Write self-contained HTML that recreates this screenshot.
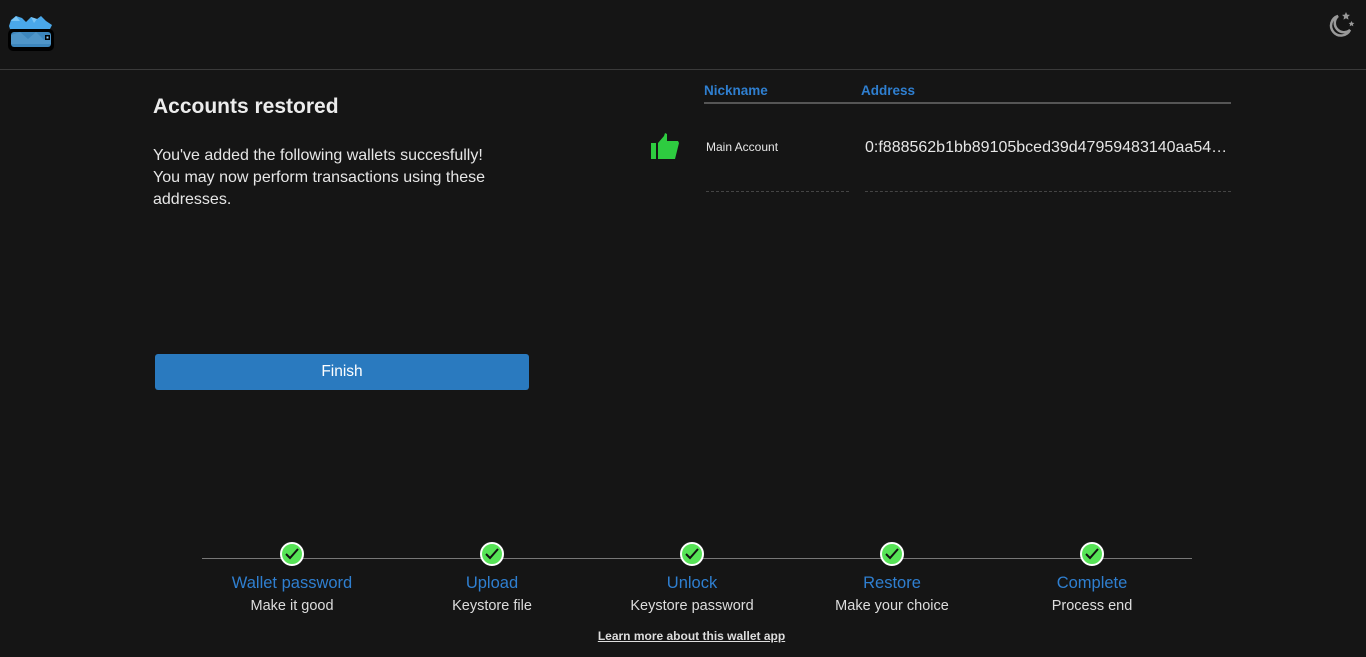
<!DOCTYPE html>
<html><head><meta charset="utf-8"><style>
*{margin:0;padding:0;box-sizing:border-box}
body{width:1366px;height:657px;background:#151515;font-family:"Liberation Sans",sans-serif;color:#e6e6e6;position:relative;overflow:hidden}
.abs{position:absolute}
.hdr{left:0;top:69px;width:1366px;height:1px;background:#3a3a3a}
h1{position:absolute;left:153px;top:95px;font-size:21px;font-weight:bold;color:#ececec}
.p{left:153px;top:145px;font-size:16px;line-height:22px;color:#e6e6e6;width:355px}
.btn{left:155px;top:354px;width:374px;height:36px;background:#2a7abf;border-radius:3px;color:#fff;font-size:15.5px;text-align:center;line-height:36px}
.th{top:82px;font-size:13.5px;font-weight:bold;color:#2f7fd0}
.step{top:540px;width:200px;text-align:center}
.step .c{width:24px;height:24px;border-radius:50%;background:#56e356;border:2px solid #fff;margin:2px auto 0;position:relative}
.step .t{color:#2f7fd0;font-size:16.5px;margin-top:8px}
.step .s{color:#ddd;font-size:14.5px;margin-top:5px}
</style></head><body>
<svg class="abs" style="left:6px;top:13px" width="48" height="40" viewBox="0 0 48 40">
<path d="M3 13 L5 7 L10 3 L16 5 L20 9 L25 4 L31 6 L35 3 L40 8 L46 12 L44 16 L4 16Z" fill="#4aa8ea"/>
<path d="M5 8 L10 3 L14 8Z M25 4 L31 6 L28 10Z" fill="#7cc6f5"/>
<rect x="2" y="16" width="46" height="22" rx="5" fill="#000"/>
<rect x="5" y="19" width="40" height="15" rx="3" fill="#3d86bc"/>
<path d="M5 22 L14 19 L22 26 L30 19 L38 27 L45 22 L45 31 L5 31Z" fill="#4f95c8"/>
<rect x="39" y="22" width="5" height="5" fill="#000"/><rect x="40.5" y="23.5" width="2" height="2" fill="#8ccfff"/>
</svg>
<svg class="abs" style="left:1326px;top:10px" width="30" height="30" viewBox="0 0 30 30">
<path d="M12 6 A10 10 0 1 0 24 20 A8 8 0 0 1 12 6Z" fill="none" stroke="#999" stroke-width="2.5"/>
<path d="M20 2 l1.2 2.6 2.8.3-2.1 1.9.6 2.8-2.5-1.4-2.5 1.4.6-2.8-2.1-1.9 2.8-.3Z" fill="#999"/>
<path d="M25.5 11 l.9 1.8 2 .2-1.5 1.3.4 2-1.8-1-1.8 1 .4-2-1.5-1.3 2-.2Z" fill="#999"/>
</svg>
<div class="abs hdr"></div>
<h1>Accounts restored</h1>
<div class="abs p">You've added the following wallets succesfully! You may now perform transactions using these addresses.</div>
<div class="abs btn">Finish</div>
<svg class="abs" style="left:651px;top:133px" width="30" height="27" viewBox="0 0 30 27">
<rect x="0" y="10" width="5" height="16" fill="#2ecc40"/>
<path d="M7 10 L13 3 L14 0 L16 1 L16 8 L27 8 L28 10 L24 26 L7 26Z" fill="#2ecc40"/>
</svg>
<div class="abs th" style="left:704px;top:83px">Nickname</div>
<div class="abs th" style="left:861px;top:83px">Address</div>
<div class="abs" style="left:704px;top:102px;width:527px;height:2px;background:#555"></div>
<div class="abs" style="left:706px;top:140px;font-size:12px;color:#e6e6e6">Main Account</div>
<div class="abs" style="left:865px;top:139px;font-size:16px;color:#e6e6e6">0:f888562b1bb89105bced39d47959483140aa54…</div>
<div class="abs" style="left:706px;top:191px;width:143px;border-top:1px dashed #444"></div>
<div class="abs" style="left:865px;top:191px;width:366px;border-top:1px dashed #444"></div>
<div class="abs" style="left:202px;top:558px;width:990px;height:1px;background:#777"></div>
<div class="abs step" style="left:192px"><div class="c"><svg width="20" height="20" viewBox="0 0 20 20"><path d="M4 10 L8 14 L16 5" fill="none" stroke="#111" stroke-width="2"/></svg></div><div class="t">Wallet password</div><div class="s">Make it good</div></div>
<div class="abs step" style="left:392px"><div class="c"><svg width="20" height="20" viewBox="0 0 20 20"><path d="M4 10 L8 14 L16 5" fill="none" stroke="#111" stroke-width="2"/></svg></div><div class="t">Upload</div><div class="s">Keystore file</div></div>
<div class="abs step" style="left:592px"><div class="c"><svg width="20" height="20" viewBox="0 0 20 20"><path d="M4 10 L8 14 L16 5" fill="none" stroke="#111" stroke-width="2"/></svg></div><div class="t">Unlock</div><div class="s">Keystore password</div></div>
<div class="abs step" style="left:792px"><div class="c"><svg width="20" height="20" viewBox="0 0 20 20"><path d="M4 10 L8 14 L16 5" fill="none" stroke="#111" stroke-width="2"/></svg></div><div class="t">Restore</div><div class="s">Make your choice</div></div>
<div class="abs step" style="left:992px"><div class="c"><svg width="20" height="20" viewBox="0 0 20 20"><path d="M4 10 L8 14 L16 5" fill="none" stroke="#111" stroke-width="2"/></svg></div><div class="t">Complete</div><div class="s">Process end</div></div>
<div class="abs" style="left:0;width:1383px;top:629px;text-align:center;font-size:12px;font-weight:bold;text-decoration:underline;color:#ddd">Learn more about this wallet app</div>
</body></html>
